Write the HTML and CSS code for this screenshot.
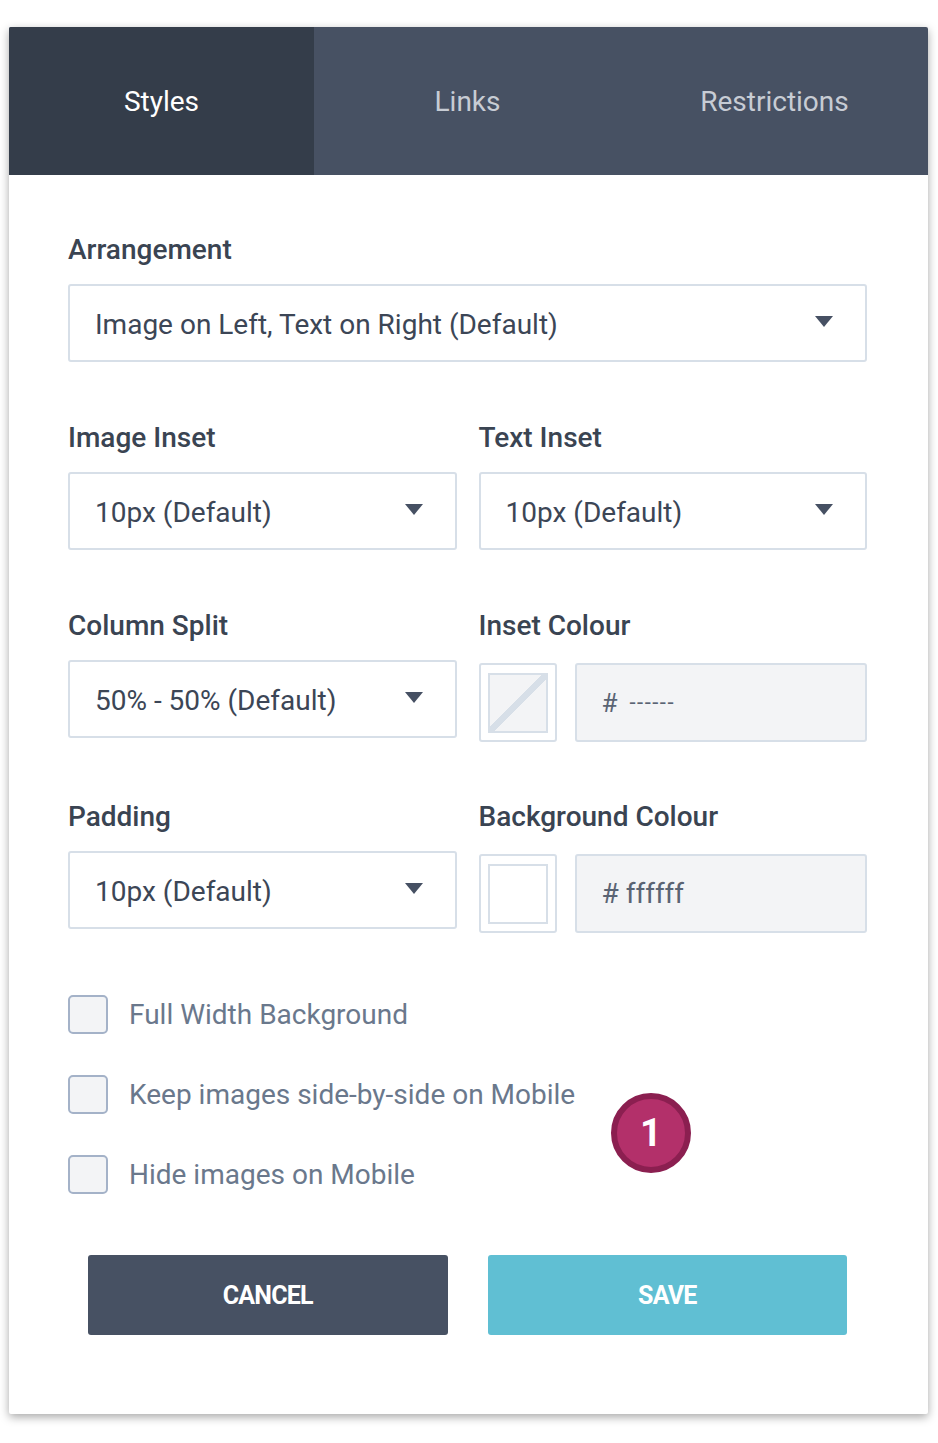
FILE: index.html
```html
<!DOCTYPE html>
<html>
<head>
<meta charset="utf-8">
<link rel="stylesheet" href="styles.css">
</head>
<body>
<div class="panel">
  <div class="tabs">
    <div class="tab active">Styles</div>
    <div class="tab">Links</div>
    <div class="tab">Restrictions</div>
  </div>
  <div class="content">
    <div class="field">
      <div class="label">Arrangement</div>
      <div class="select"><span>Image on Left, Text on Right (Default)</span><i class="caret"></i></div>
    </div>
    <div class="row">
      <div class="field">
        <div class="label">Image Inset</div>
        <div class="select"><span>10px (Default)</span><i class="caret"></i></div>
      </div>
      <div class="field">
        <div class="label">Text Inset</div>
        <div class="select"><span>10px (Default)</span><i class="caret"></i></div>
      </div>
    </div>
    <div class="row">
      <div class="field">
        <div class="label">Column Split</div>
        <div class="select"><span>50% - 50% (Default)</span><i class="caret"></i></div>
      </div>
      <div class="field colour-field">
        <div class="label">Inset Colour</div>
        <div class="colour">
          <div class="swatch"><div class="swatch-inner none"></div></div>
          <div class="hex"><span class="hash">#</span><span class="dashes">------</span></div>
        </div>
      </div>
    </div>
    <div class="row row-last">
      <div class="field">
        <div class="label">Padding</div>
        <div class="select"><span>10px (Default)</span><i class="caret"></i></div>
      </div>
      <div class="field colour-field">
        <div class="label">Background Colour</div>
        <div class="colour">
          <div class="swatch"><div class="swatch-inner white"></div></div>
          <div class="hex"><span>#&nbsp;ffffff</span></div>
        </div>
      </div>
    </div>
    <div class="checks">
      <label class="check"><span class="box"></span><span>Full Width Background</span></label>
      <label class="check"><span class="box"></span><span>Keep images side-by-side on Mobile</span></label>
      <label class="check"><span class="box"></span><span>Hide images on Mobile</span></label>
      <div class="badge">1</div>
    </div>
    <div class="buttons">
      <div class="btn cancel">CANCEL</div>
      <div class="btn save">SAVE</div>
    </div>
  </div>
</div>
</body>
</html>
```
FILE: styles.css
```css
html, body {
  margin: 0;
  padding: 0;
  background: #ffffff;
}
body {
  padding: 27px 10px 29px 9px;
  font-family: Roboto, "Liberation Sans", Arial, sans-serif;
}
.panel {
  background: #ffffff;
  box-shadow: 0 3px 10px rgba(0, 0, 0, 0.35);
  border-radius: 2px;
  overflow: hidden;
}
.tabs {
  display: flex;
  height: 148px;
  background: #475163;
}
.tab {
  flex: 1;
  display: flex;
  align-items: center;
  justify-content: center;
  font-size: 28px;
  color: #c7ccd4;
}
.tab.active {
  background: #343d4a;
  color: #ffffff;
  flex: 0 0 305px;
}
.content {
  padding: 60px 61px 79px 59px;
  position: relative;
}
.row {
  display: flex;
  gap: 22px;
  margin-top: 61px;
}
.row-last {
  margin-top: 64px;
}
.row .field {
  flex: 1;
  min-width: 0;
}
.label {
  font-size: 28px;
  line-height: 30px;
  font-weight: 500;
  color: #3a4452;
  margin-bottom: 19px;
}
.colour-field .label {
  margin-bottom: 22px;
}
.select {
  height: 78px;
  box-sizing: border-box;
  border: 2px solid #d7dfe8;
  border-radius: 3px;
  display: flex;
  align-items: center;
  justify-content: space-between;
  padding: 0 32px 0 25px;
  font-size: 28px;
  color: #3c4656;
}
.select span {
  padding-top: 3px;
}
.caret {
  width: 0;
  height: 0;
  border-left: 9px solid transparent;
  border-right: 9px solid transparent;
  border-top: 11px solid #465063;
  margin-top: -4px;
}
.colour {
  display: flex;
  gap: 18px;
  margin-bottom: -4px;
}
.swatch {
  width: 78px;
  height: 79px;
  box-sizing: border-box;
  border: 2px solid #d7dfe8;
  border-radius: 3px;
  display: flex;
  align-items: center;
  justify-content: center;
  flex: none;
}
.swatch-inner {
  width: 60px;
  height: 60px;
  box-sizing: border-box;
  border: 2px solid #d7dfe8;
}
.swatch-inner.none {
  background: #f3f4f6 linear-gradient(to bottom right, transparent calc(50% - 3px), #d7dfe8 calc(50% - 3px), #d7dfe8 calc(50% + 3px), transparent calc(50% + 3px));
}
.swatch-inner.white {
  background: #ffffff;
}
.hex {
  flex: 1;
  height: 79px;
  box-sizing: border-box;
  border: 2px solid #d7dfe8;
  border-radius: 3px;
  background: #f3f4f6;
  display: flex;
  align-items: center;
  padding-left: 25px;
  font-size: 28px;
  color: #5a6474;
}
.hash {
  margin-right: 12px;
  font-size: 26px;
}
.dashes {
  font-size: 22px;
  letter-spacing: 1.5px;
}
.checks {
  position: relative;
  margin-top: 65px;
  display: flex;
  flex-direction: column;
  gap: 40px;
}
.check {
  display: flex;
  align-items: center;
  gap: 21px;
  font-size: 28px;
  color: #6a788c;
  height: 40px;
}
.box {
  width: 40px;
  height: 39px;
  box-sizing: border-box;
  border: 2px solid #a4b2c8;
  border-radius: 5px;
  background: #f3f4f6;
  flex: none;
}
.badge {
  position: absolute;
  left: 543px;
  top: 99px;
  width: 80px;
  height: 80px;
  box-sizing: border-box;
  border-radius: 50%;
  background: #b3306a;
  border: 6px solid #8b1f50;
  color: #ffffff;
  font-size: 38px;
  font-weight: 700;
  display: flex;
  align-items: center;
  justify-content: center;
}
.buttons {
  display: flex;
  gap: 40px;
  padding: 0 20px;
  margin-top: 61px;
}
.btn {
  flex: 1;
  height: 80px;
  border-radius: 3px;
  display: flex;
  align-items: center;
  justify-content: center;
  color: #ffffff;
  font-size: 25px;
  font-weight: 700;
  letter-spacing: -0.8px;
}
.cancel {
  background: #475163;
}
.save {
  background: #60bfd3;
}
```
